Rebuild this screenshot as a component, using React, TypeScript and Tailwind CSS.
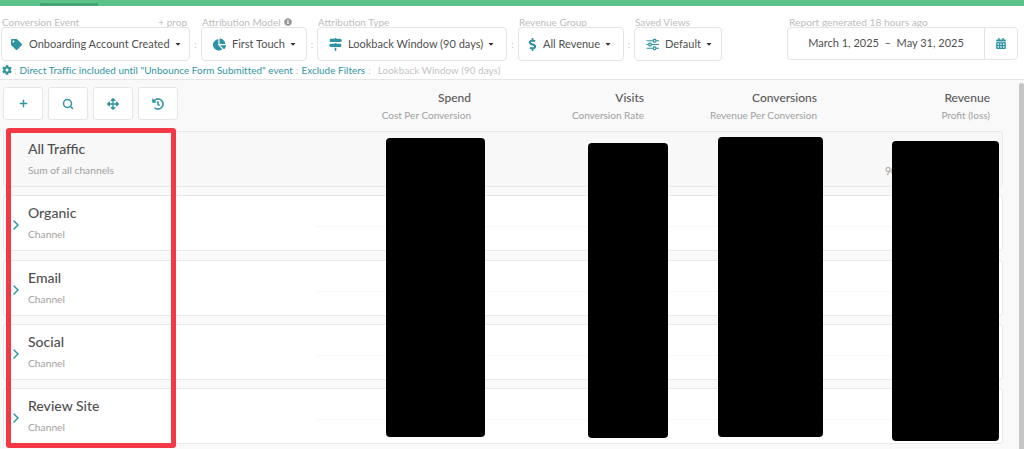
import {
  FaTag,
  FaChartPie,
  FaMapSigns,
  FaDollarSign,
  FaCalendarAlt,
  FaCog,
  FaArrowsAlt,
  FaHistory,
  FaInfoCircle,
  FaCaretDown,
} from "react-icons/fa";
import { ChevronRight, Plus, Search } from "lucide-react";

const FONT = { fontFamily: "Lato, 'Noto Sans', sans-serif" };

function Sliders({ className }: { className?: string }) {
  return (
    <svg viewBox="0 0 14 13" fill="none" stroke="currentColor" strokeWidth="1.25" className={className}>
      <path d="M0.5 2.5H14M0.5 6.5H14M0.5 10.5H14" />
      <rect x="8" y="1" width="2.6" height="3" rx="0.6" fill="white" />
      <rect x="3" y="5" width="2.6" height="3" rx="0.6" fill="white" />
      <rect x="8" y="9" width="2.6" height="3" rx="0.6" fill="white" />
    </svg>
  );
}

const CONTROLS = [
  { label: "Conversion Event", text: "Onboarding Account Created", Icon: FaTag, size: "w-[11px] h-[11px]", w: "w-[189px]", pad: "pl-[9px]", gap: "gap-[7px]", sep: "w-[11px]", extra: "+ prop" },
  { label: "Attribution Model", text: "First Touch", Icon: FaChartPie, size: "w-[13px] h-[13px]", w: "w-[106px]", pad: "pl-[11px]", gap: "gap-[6px]", sep: "w-[10px]", info: true },
  { label: "Attribution Type", text: "Lookback Window (90 days)", Icon: FaMapSigns, size: "w-[13px] h-[13px]", w: "w-[190px]", pad: "pl-[11px]", gap: "gap-[6px]", sep: "w-[11px]" },
  { label: "Revenue Group", text: "All Revenue", Icon: FaDollarSign, size: "w-[13px] h-[13px]", w: "w-[106px]", pad: "pl-[7px]", gap: "gap-[4px]", sep: "w-[10px]" },
  { label: "Saved Views", text: "Default", Icon: Sliders, size: "w-[13px] h-[13px]", w: "w-[88px]", pad: "pl-[11px]", gap: "gap-[6px]" },
];

const TOOLS = [
  <Plus key="add" className="w-[11px] h-[11px]" strokeWidth={3} />,
  <Search key="search" className="w-[12px] h-[12px]" strokeWidth={3} />,
  <FaArrowsAlt key="move" className="w-[12px] h-[12px]" />,
  <FaHistory key="history" className="w-[12px] h-[12px]" />,
];

const COLUMNS = [
  ["Spend", "Cost Per Conversion"],
  ["Visits", "Conversion Rate"],
  ["Conversions", "Revenue Per Conversion"],
  ["Revenue", "Profit (loss)"],
];

const ROWS = [
  { title: "All Traffic", sub: "Sum of all channels", total: true },
  { title: "Organic", sub: "Channel" },
  { title: "Email", sub: "Channel" },
  { title: "Social", sub: "Channel" },
  { title: "Review Site", sub: "Channel" },
];

// redaction blocks and the red highlight sit on top of the table in the source
const BLOCKS = [
  "left-[386px] top-[138px] w-[99px] h-[299px]",
  "left-[588px] top-[143px] w-[80px] h-[295px]",
  "left-[718px] top-[137px] w-[105px] h-[300px]",
  "left-[892px] top-[141px] w-[107px] h-[300px]",
];

function Row({ title, sub, total }: { title: string; sub: string; total?: boolean }) {
  return (
    <div className={`relative h-[56px] shrink-0 pl-[24px] border border-[#e9e9e9] rounded-[3px] ${total ? "bg-[#f8f8f8]" : "bg-white"}`}>
      {!total && <ChevronRight className="absolute left-[4px] top-[21px] w-[16px] h-[16px] text-[#2f93a1]" strokeWidth={2.25} />}
      <div className="text-[14px] leading-[18px] pt-[8px] text-[#505050] font-medium">{title}</div>
      <div className="text-[10.25px] leading-[14px] mt-[5px] text-[#a0a0a0]">{sub}</div>
      {total && <span className="absolute left-[881px] top-[32px] text-[10.5px] leading-[14px] text-[#a0a0a0]">90</span>}
      {!total && <div className="absolute left-[312px] right-[2px] top-[30px] h-px bg-[#f7f7f7]" />}
    </div>
  );
}

export default function App() {
  return (
    <div className="relative h-[449px] overflow-hidden bg-white" style={FONT}>
      <div className="h-[6px] bg-[#5cc28c] pt-[3px]">
        <div className="ml-[40px] w-[58px] h-[3px] bg-[#45a374]" />
      </div>

      <div className="h-[74px] border-b border-[#e6e6e6] pl-[1px] pr-[6px] pt-[11px]">
        <div className="flex items-end">
          {CONTROLS.map(c => (
            <div key={c.label} className="flex items-end">
              <div className={`${c.w} flex flex-col`}>
                <div className="h-[10px] flex items-center justify-between pl-[1px] pr-[3px] text-[10px] leading-[10px] text-[#bdbdbd] whitespace-nowrap">
                  <span className="flex items-center gap-[3px]">
                    {c.label}
                    {c.info && <FaInfoCircle className="w-[8px] h-[8px] text-[#999]" />}
                  </span>
                  {c.extra && <span>{c.extra}</span>}
                </div>
                <div className={`h-[34px] border border-[#e4e4e4] rounded-[4px] bg-white flex items-center gap-[4px] ${c.pad} text-[11px] text-[#505050] whitespace-nowrap`}>
                  <div className={`flex items-center ${c.gap}`}>
                    <c.Icon className={`${c.size} shrink-0 text-[#2f93a1]`} />
                    <span>{c.text}</span>
                  </div>
                  <FaCaretDown className="w-[8px] h-[8px] shrink-0 text-[#333]" />
                </div>
              </div>
              {c.sep && (
                <span className={`${c.sep} h-[33px] flex items-center justify-center text-[10px] text-[#c4c4c4]`}>:</span>
              )}
            </div>
          ))}

          <div className="ml-auto w-[231px] flex flex-col">
            <div className="h-[10px] flex items-center pl-[2px] text-[10.2px] leading-[10px] text-[#bdbdbd] whitespace-nowrap">Report generated 18 hours ago</div>
            <div className="h-[33px] mb-[1px] border border-[#e4e4e4] rounded-[4px] flex items-center text-[11px] text-[#505050]">
              <div className="flex-1 text-center whitespace-nowrap">March 1, 2025&nbsp; –&nbsp; May 31, 2025</div>
              <div className="w-[33px] h-full border-l border-[#e4e4e4] flex items-center justify-center">
                <FaCalendarAlt className="w-[10px] h-[11px] text-[#2f93a1]" />
              </div>
            </div>
          </div>
        </div>

        <div className="mt-[2px] flex items-center text-[9.9px] tracking-[0.05px] leading-[14px] whitespace-nowrap text-[#2f93a1]">
          <FaCog className="w-[10px] h-[10px] ml-[1px] mr-[2px]" />
          <span className="text-[#c4c4c4] mr-[3px]">:</span>
          <span>Direct Traffic included until "Unbounce Form Submitted" event</span>
          <span className="text-[#c4c4c4] mx-[3px]">:</span>
          <span>Exclude Filters</span>
          <span className="text-[#c4c4c4] ml-[3px] mr-[7px]">:</span>
          <span className="text-[#c4c4c4]">Lookback Window (90 days)</span>
        </div>
      </div>

      <div className="h-[369px] bg-[#f9f9f9] pl-[3px] pt-[7px]">
        <div className="flex h-[44px]">
          <div className="w-[173px] flex gap-[5px]">
            {TOOLS.map((icon, i) => (
              <div key={i} className="w-[40px] h-[33px] shrink-0 bg-white border border-[#e6e6e6] rounded-[3px] flex items-center justify-center text-[#2f93a1]">
                {icon}
              </div>
            ))}
          </div>
          <div className="ml-[122px] flex">
            {COLUMNS.map(([h, s]) => (
              <div key={h} className="w-[173px] text-right whitespace-nowrap">
                <div className="text-[12px] leading-[16px] pt-[3px] text-[#585858] font-medium">{h}</div>
                <div className="text-[10px] leading-[14px] mt-[2px] text-[#a0a0a0]">{s}</div>
              </div>
            ))}
          </div>
        </div>

        <div className="w-[1000px] flex flex-col gap-[8.25px]">
          {ROWS.map(r => (
            <Row key={r.title} {...r} />
          ))}
        </div>
      </div>

      <div className="absolute right-0 top-[83px] bottom-0 w-[5px] rounded-t-[2px] bg-[#c6c6c6]" />
      {BLOCKS.map(b => (
        <div key={b} className={`absolute ${b} bg-black rounded-[4px]`} />
      ))}
      <div className="absolute left-[6px] top-[128px] w-[170px] h-[320px] border-[5px] border-[#f23a47] rounded-[3px]" />
    </div>
  );
}
